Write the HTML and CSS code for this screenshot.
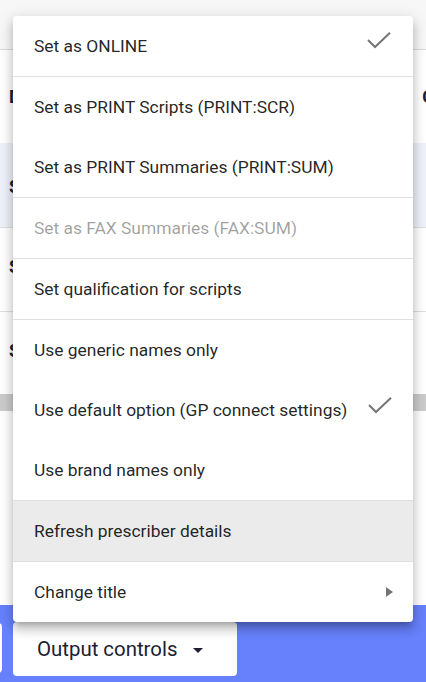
FILE: index.html
```html
<!DOCTYPE html>
<html lang="en">
<head>
<meta charset="utf-8">
<title>Output controls</title>
<link rel="stylesheet" href="styles.css">
</head>
<body>
<div class="page">
  <div class="topbar"></div>
  <div class="thead">
    <span class="cell-left">D</span>
    <span class="cell-right">C</span>
  </div>
  <div class="row selected"><span class="cell-left">S</span></div>
  <div class="row"><span class="cell-left">S</span></div>
  <div class="row last"><span class="cell-left">S</span></div>
  <div class="scrollbar"></div>
  <div class="spacer"></div>
  <div class="footer">
    <button class="fbtn back" aria-label="Back"></button>
    <button class="fbtn main">Output controls <span class="caret"></span></button>
  </div>

  <div class="menu">
    <div class="item">
      <span class="label">Set as ONLINE</span>
      <svg class="check" width="26" height="24" viewBox="0 0 26 24"><polyline points="1,8 8,15 23,0.8" fill="none" stroke="#757575" stroke-width="2"/></svg>
    </div>
    <div class="sep"></div>
    <div class="item"><span class="label">Set as PRINT Scripts (PRINT:SCR)</span></div>
    <div class="item"><span class="label">Set as PRINT Summaries (PRINT:SUM)</span></div>
    <div class="sep"></div>
    <div class="item disabled"><span class="label">Set as FAX Summaries (FAX:SUM)</span></div>
    <div class="sep"></div>
    <div class="item"><span class="label">Set qualification for scripts</span></div>
    <div class="sep"></div>
    <div class="item"><span class="label">Use generic names only</span></div>
    <div class="item">
      <span class="label">Use default option (GP connect settings)</span>
      <svg class="check second" width="26" height="24" viewBox="0 0 26 24"><polyline points="2,8 9,15 24,0.8" fill="none" stroke="#757575" stroke-width="2"/></svg>
    </div>
    <div class="item"><span class="label">Use brand names only</span></div>
    <div class="sep"></div>
    <div class="item hover"><span class="label">Refresh prescriber details</span></div>
    <div class="sep"></div>
    <div class="item">
      <span class="label">Change title</span>
      <svg class="arrow" width="8" height="24" viewBox="0 0 8 24"><polygon points="1,7 8,12 1,17" fill="#757575"/></svg>
    </div>
  </div>
</div>
</body>
</html>
```

FILE: styles.css
```css
* { box-sizing: border-box; }
html, body {
  margin: 0;
  padding: 0;
  background: #ffffff;
  font-family: Roboto, "Liberation Sans", Arial, sans-serif;
}
.page {
  position: relative;
  width: 426px;
  height: 682px;
  overflow: hidden;
  display: flex;
  flex-direction: column;
}
.topbar {
  height: 50px;
  flex: none;
  background: #f7f7f7;
  border-bottom: 1px solid #dadada;
}
.thead {
  height: 93px;
  flex: none;
  display: flex;
  align-items: center;
  justify-content: space-between;
  padding: 0 0 0 9px;
  font-weight: 700;
  font-size: 18px;
  color: #1c2033;
  white-space: nowrap;
}
.thead .cell-right {
  margin-right: -8px;
}
.row {
  height: 84px;
  flex: none;
  display: flex;
  align-items: center;
  padding: 0 0 6px 9px;
  border-top: 1px solid #dedede;
  font-size: 18px;
  font-weight: 700;
  color: #1c2033;
  white-space: nowrap;
}
.row.selected {
  background: #eef0fa;
  border-top: none;
  height: 84px;
  padding-top: 8px;
}
.row.last { height: 83px; }
.scrollbar {
  height: 17px;
  flex: none;
  background: #cbcbcb;
}
.spacer {
  flex: 1;
  background: #ffffff;
}
.footer {
  height: 77px;
  flex: none;
  background: #6781fc;
  display: flex;
  align-items: flex-start;
  gap: 11px;
  padding-top: 17px;
}
.fbtn {
  border: none;
  background: #ffffff;
  border-radius: 4px;
  font-family: Roboto, "Liberation Sans", Arial, sans-serif;
  color: #1c2033;
}
.fbtn.back {
  width: 100px;
  height: 50px;
  margin-left: -98px;
  margin-top: 1px;
}
.fbtn.main {
  width: 224px;
  height: 54px;
  font-size: 20.4px;
  text-align: left;
  padding: 0 0 0 24px;
  display: flex;
  align-items: center;
  gap: 16px;
}
.caret {
  width: 0;
  height: 0;
  border-left: 5px solid transparent;
  border-right: 5px solid transparent;
  border-top: 5px solid #1c2033;
  margin-top: 2px;
}
.menu {
  position: absolute;
  top: 16px;
  left: 13px;
  width: 400px;
  background: #ffffff;
  border-radius: 4px;
  overflow: hidden;
  box-shadow: 0px 5px 5px -3px rgba(0,0,0,0.2), 0px 8px 10px 1px rgba(0,0,0,0.14), 0px 3px 14px 2px rgba(0,0,0,0.12);
}
.item {
  height: 60px;
  display: flex;
  align-items: center;
  padding: 0 20px 0 21px;
  font-size: 17.4px;
  color: rgba(0,0,0,0.87);
}
.item .label { flex: 1; white-space: nowrap; }
.item.disabled { color: rgba(0,0,0,0.38); }
.item.hover { background: #ebebeb; }
.sep {
  height: 1px;
  background: #e0e0e0;
}
.check { flex: none; margin-top: -5px; }
.check.second { margin-top: -2px; }
.arrow { flex: none; }
```
